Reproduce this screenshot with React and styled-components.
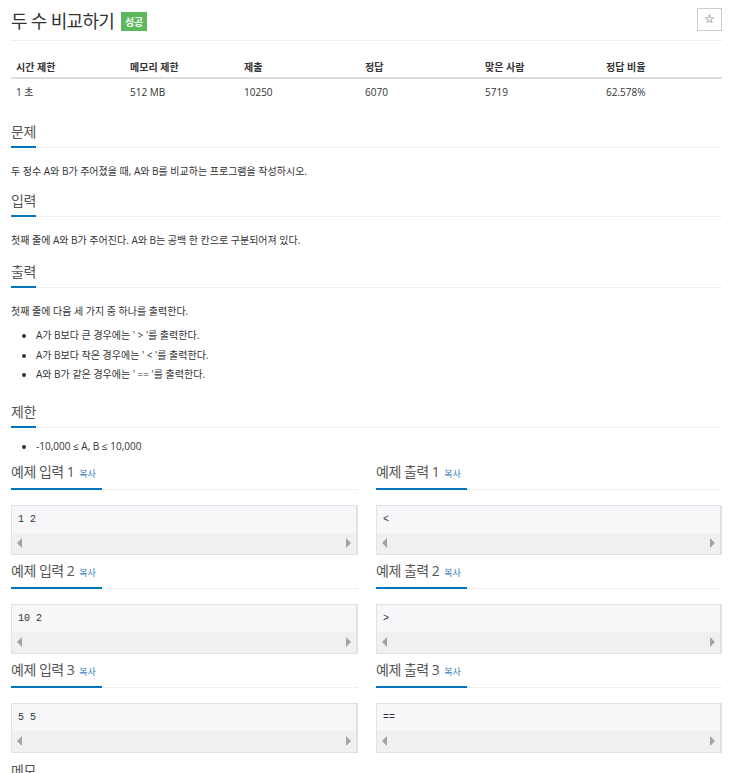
import React from "react";
import styled, { createGlobalStyle } from "styled-components";

const GlobalStyle = createGlobalStyle`
    body {
        margin: 0;
        background: #fff;
        font-family: "Open Sans", "Noto Sans CJK KR", sans-serif;
        color: #333;
    }
`;

const Page = styled.div`
    width: 711px;
    padding: 0 14px 0 11px;
    height: 773px;
    overflow: hidden;
`;

const TitleBar = styled.div`
    display: flex;
    align-items: center;
    justify-content: space-between;
    height: 40px;
    border-bottom: 1px solid #eee;
`;

const Title = styled.h1`
    display: flex;
    align-items: center;
    gap: 7px;
    margin: 0;
    font-size: 18px;
    letter-spacing: -0.7px;
    font-weight: 400;
    color: #333;
`;

const Badge = styled.span`
    display: inline-flex;
    align-items: center;
    justify-content: center;
    width: 26px;
    height: 19px;
    background: #5cb85c;
    color: #fff;
    font-size: 10px;
    letter-spacing: 0;
    font-weight: 700;
    margin-top: 2px;
`;

const StarButton = styled.button`
    width: 25px;
    height: 23px;
    border: 1px solid #ccc;
    background: #fff;
    padding: 0;
    font-size: 12px;
    color: #333;
    margin-bottom: 2px;
`;

const Table = styled.div`
    display: grid;
    grid-template-columns: 114px 114px 121px 120px 121px 121px;
    margin-top: 16px;
    font-size: 10px;
`;

const Cell = styled.div`
    padding: 0 5px;
    height: ${p => (p.head ? "20px" : "22px")};
    line-height: ${p => (p.head ? "20px" : "26px")};
    font-weight: ${p => (p.head ? 700 : 400)};
    border-bottom: ${p => (p.head ? "2px solid #ddd" : "none")};
    color: #333;
`;

const SectionHead = styled.div`
    display: flex;
    border-bottom: 1px dotted #ddd;
    margin-top: ${p => p.top || "13px"};
`;

const HeadText = styled.h2`
    margin: 0 0 -1px;
    font-size: 14px;
    font-weight: 400;
    letter-spacing: -0.5px;
    line-height: 20px;
    color: #555;
    padding-bottom: 4px;
    border-bottom: 2px solid #0076c0;
    padding-right: ${p => p.pad || "0"};
`;

const Copy = styled.span`
    font-size: 9px;
    letter-spacing: 0;
    color: #3b7fc4;
    margin-left: 5px;
`;

const Para = styled.p`
    margin: 16px 0 0;
    font-size: 10px;
    line-height: 14px;
    color: #333;
`;

const List = styled.ul`
    margin: ${p => p.top || "10px"} 0 0;
    padding-left: 25px;
    font-size: 10px;
    color: #333;
`;

const Item = styled.li`
    line-height: 14px;
    margin-bottom: 5.5px;
`;

const SampleGrid = styled.div`
    display: grid;
    grid-template-columns: 347px 346px;
    column-gap: 18px;
`;

const SampleBox = styled.div`
    margin-top: 15px;
    border: 1px solid #e1e1e8;
    border-right-width: 2px;
    background: #f7f7f9;
`;

const Code = styled.pre`
    margin: 0;
    height: 27px;
    padding: 0 6px;
    line-height: 27px;
    font-family: "Liberation Mono", monospace;
    font-size: 10px;
    color: #333;
`;

const Scrollbar = styled.div`
    display: flex;
    align-items: center;
    justify-content: space-between;
    height: 21px;
    padding: 0 5px;
    background: #f0f0f0;
`;

const Arrow = styled.span`
    width: 0;
    height: 0;
    border-top: 5px solid transparent;
    border-bottom: 5px solid transparent;
    ${p => (p.right ? "border-left: 5px solid #a3a3a3;" : "border-right: 5px solid #a3a3a3;")}
`;

const info = [
    ["시간 제한", "1 초"],
    ["메모리 제한", "512 MB"],
    ["제출", "10250"],
    ["정답", "6070"],
    ["맞은 사람", "5719"],
    ["정답 비율", "62.578%"],
];

const samples = [
    ["1 2", "<"],
    ["10 2", ">"],
    ["5 5", "=="],
];

const Sample = ({ label, n, code, first }) => (
    <div>
        <SectionHead top={first ? "3px" : "6px"}>
            <HeadText pad="6px">
                {label} {n}
                <Copy>복사</Copy>
            </HeadText>
        </SectionHead>
        <SampleBox>
            <Code>{code}</Code>
            <Scrollbar>
                <Arrow />
                <Arrow right />
            </Scrollbar>
        </SampleBox>
    </div>
);

const App = () => {
    return (
        <Page>
            <GlobalStyle />
            <TitleBar>
                <Title>
                    두 수 비교하기
                    <Badge>성공</Badge>
                </Title>
                <StarButton>☆</StarButton>
            </TitleBar>

            <Table>
                {info.map(([h]) => (
                    <Cell head key={h}>{h}</Cell>
                ))}
                {info.map(([h, v]) => (
                    <Cell key={h + v}>{v}</Cell>
                ))}
            </Table>

            <SectionHead top="21px">
                <HeadText>문제</HeadText>
            </SectionHead>
            <Para>두 정수 A와 B가 주어졌을 때, A와 B를 비교하는 프로그램을 작성하시오.</Para>

            <SectionHead>
                <HeadText>입력</HeadText>
            </SectionHead>
            <Para>첫째 줄에 A와 B가 주어진다. A와 B는 공백 한 칸으로 구분되어져 있다.</Para>

            <SectionHead top="15px">
                <HeadText>출력</HeadText>
            </SectionHead>
            <Para>첫째 줄에 다음 세 가지 중 하나를 출력한다.</Para>
            <List>
                <Item>A가 B보다 큰 경우에는 ' &gt; '를 출력한다.</Item>
                <Item>A가 B보다 작은 경우에는 ' &lt; '를 출력한다.</Item>
                <Item>A와 B가 같은 경우에는 ' == '를 출력한다.</Item>
            </List>

            <SectionHead top="21px">
                <HeadText>제한</HeadText>
            </SectionHead>
            <List top="11px">
                <Item>-10,000 ≤ A, B ≤ 10,000</Item>
            </List>

            <SampleGrid>
                {samples.map(([input, output], i) => (
                    <React.Fragment key={i}>
                        <Sample label="예제 입력" n={i + 1} code={input} first={i === 0} />
                        <Sample label="예제 출력" n={i + 1} code={output} first={i === 0} />
                    </React.Fragment>
                ))}
            </SampleGrid>

            <SectionHead top="8px">
                <HeadText>메모</HeadText>
            </SectionHead>
        </Page>
    );
};

export default App;
